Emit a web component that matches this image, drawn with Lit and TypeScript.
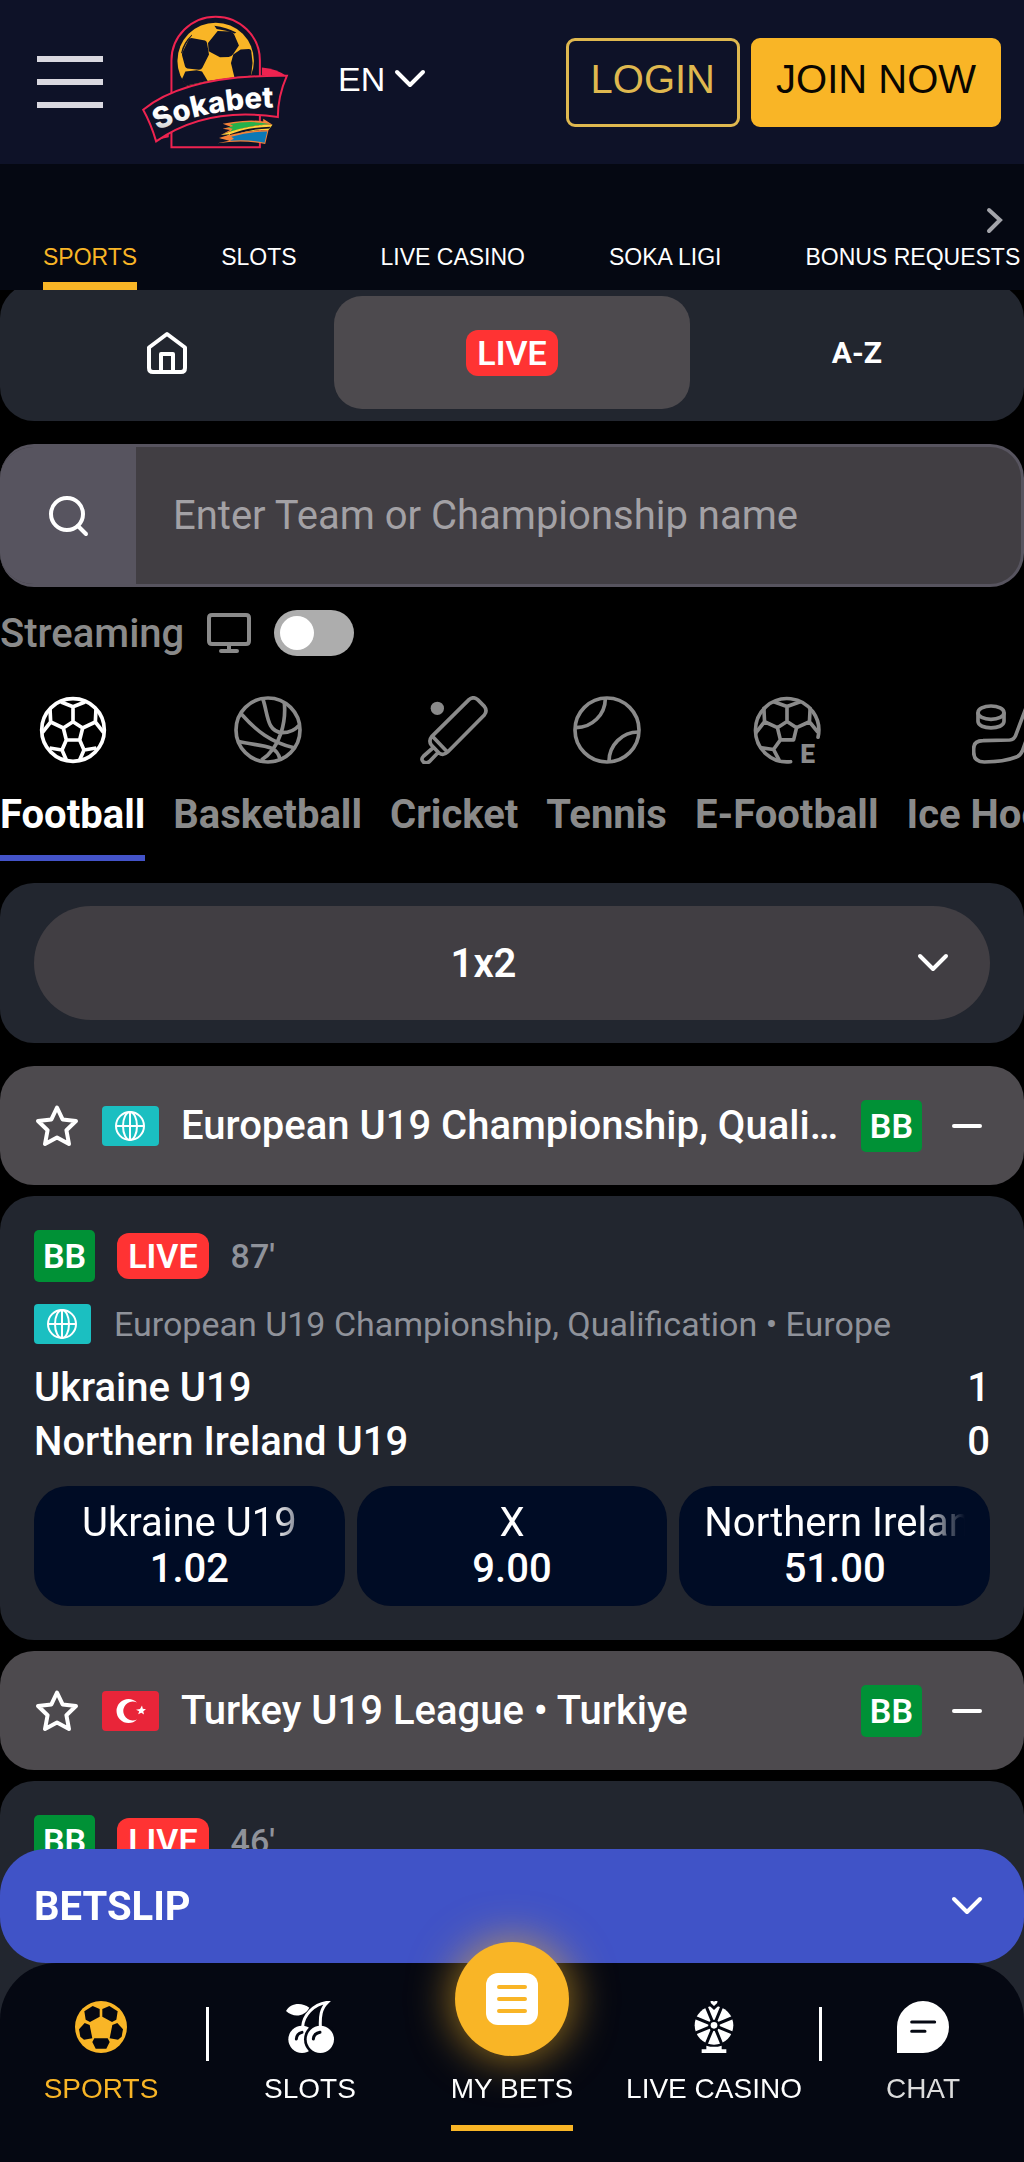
import { LitElement, html, css, nothing, TemplateResult } from "lit";
import { customElement, property, state } from "lit/decorators.js";
import { classMap } from "lit/directives/class-map.js";

/* ---------- icons ---------- */

const chevronDown = html`<svg class="chevron" viewBox="0 0 32 20" aria-hidden="true">
  <path d="M3 3 16 16 29 3" fill="none" stroke="currentColor" stroke-width="4" stroke-linecap="round" stroke-linejoin="round" />
</svg>`;

const football = html`<svg viewBox="116 74 204 204" aria-hidden="true">
  <g fill="none" stroke="currentColor" stroke-width="11" stroke-linejoin="round">
    <circle cx="218" cy="176" r="94" />
    <path d="M218 151 247 170 238 206H198L189 170Z M218 151V106M182 92 218 106 254 92M189 170 151 152 149 112M151 152 126 184M247 170 285 152 287 112M285 152 310 184M198 206 185 236 198 266M185 236 148 230M238 206 251 236 238 266M251 236 288 230" />
  </g>
</svg>`;

const basketball = html`<svg viewBox="700 78 204 204" aria-hidden="true">
  <g fill="none" stroke="currentColor" stroke-width="11">
    <circle cx="802" cy="180" r="96" />
    <path d="M787 88C802 132 798 186 845 188C869 188 884 179 895 166M851 98C856 150 842 232 782 270M722 132C766 182 812 218 880 233M711 214C776 230 828 220 838 268" />
  </g>
</svg>`;

const cricket = html`<svg viewBox="1258 78 204 204" aria-hidden="true">
  <circle cx="1310" cy="115" r="20" fill="currentColor" />
  <g fill="none" stroke="currentColor" stroke-width="11" stroke-linejoin="round" stroke-linecap="round">
    <path d="M1405 89Q1418 78 1431 89L1451 109Q1461 122 1451 135L1341 246Q1328 258 1315 249L1292 225Q1283 212 1293 200ZM1298 202 1338 244M1293 237 1269 258Q1259 268 1268 276Q1280 282 1288 273L1308 252" />
  </g>
</svg>`;

const tennis = html`<svg viewBox="180 78 204 204" aria-hidden="true">
  <g fill="none" stroke="currentColor" stroke-width="11">
    <circle cx="282" cy="180" r="96" />
    <path d="M277 86A88 88 0 0 1 188 173M288 274A88 88 0 0 1 376 186" />
  </g>
</svg>`;

const eFootball = html`<svg viewBox="718 76 204 206" aria-hidden="true">
  <g fill="none" stroke="currentColor" stroke-width="11" stroke-linejoin="round" stroke-linecap="round">
    <path d="M914 201A96 96 0 1 0 831 275" />
    <path d="M820 153 849 172 840 209H800L791 172ZM820 153V108M782 94 820 108 858 94M791 172 752 154 750 113M752 154 726 187M849 172 888 154 890 113M888 154 912 184M800 209 779 238 795 268M779 238 742 233" />
  </g>
  <text class="badge-letter" x="860" y="280" font-size="80" fill="currentColor">E</text>
</svg>`;

const hockey = html`<svg viewBox="1375 78 204 204" aria-hidden="true">
  <g fill="none" stroke="currentColor" stroke-width="11" stroke-linejoin="round" stroke-linecap="round">
    <ellipse cx="1432" cy="128" rx="39" ry="20" />
    <path d="M1393 130V154C1393 180 1471 180 1471 154V130M1548 84 1506 196Q1501 209 1488 210L1408 212Q1380 212 1380 236V246Q1380 276 1412 276Q1470 276 1508 261Q1520 257 1526 243L1574 110" />
  </g>
</svg>`;

const logo = html`<svg class="logo-art" viewBox="420 40 450 415" role="img" aria-label="Sokabet">
  <defs>
    <clipPath id="ball"><path d="M500 40H800V226Q640 232 500 275Z" /></clipPath>
    <linearGradient id="shine" x1="0" y1="0" x2="0" y2="1">
      <stop offset="0.6" stop-color="#fff" /><stop offset="1" stop-color="#b9b9bd" />
    </linearGradient>
  </defs>
  <path d="M514 444V183A133 132 0 0 1 780 183V444Z" fill="#0e1228" stroke="#ee2350" stroke-width="6" />
  <g clip-path="url(#ball)">
    <circle cx="647" cy="184" r="115" fill="#f9b526" />
    <g fill="#0e1228">
      <path d="M574 115 615 123Q620 125 621 130L627 165 607 205Q604 211 597 211L562 207Q557 206 555 201L546 168Q545 163 547 158L566 120Q568 115 574 115Z" />
      <path d="M653 94 690 96Q698 98 702 103L717 138 700 163Q695 171 686 172L660 173 626 155 624 130Z" />
      <path d="M722 150 747 148Q753 148 754 154L758 190 752 240H705L693 190 700 165Z" />
      <path d="M556 216 590 212 606 216 624 246 560 262 545 240Z" />
      <path d="M643 78Q680 82 709 99L704 102Q680 92 650 88Z" />
      <path d="M576 105Q550 128 543 160L546 162Q556 130 576 108Z" />
    </g>
  </g>
  <path d="M786 204Q830 208 861 230L786 227Z" fill="#ee2350" />
  <path d="M478 420 506 402V414Z" fill="#ee2350" />
  <path d="M429 331Q560 225 861 229Q834 290 834 353Q620 320 468 426Q452 372 429 331Z" fill="#0e1228" stroke="#ee2350" stroke-width="6" />
  <path id="arc" d="M472 393Q620 326 840 324" fill="none" />
  <text class="logo-text" font-size="88" fill="url(#shine)"><textPath href="#arc">Sokabet</textPath></text>
  <path d="M668 373 700 368Q750 360 790 366L790 358 818 376Q740 376 664 406L690 392 668 388 692 382Z" fill="#f58238" />
  <path d="M690 374Q750 362 812 374Q745 378 690 398L698 388 684 384 700 380Z" fill="#25b24a" />
  <path d="M662 407Q740 376 818 376L806 392Q740 390 660 420L690 405Z" fill="#ffd23a" />
  <path d="M690 405Q740 384 812 382L808 387Q750 388 690 411Z" fill="#0e1228" />
  <path d="M657 416Q720 394 806 392L796 434Q730 420 652 432L688 424Z" fill="#f58238" />
  <path d="M694 412Q750 396 802 396L794 430Q750 420 690 424L702 418Z" fill="#0b79b5" />
</svg>`;

const globeFlag = html`<svg class="flag" viewBox="0 0 57 40" aria-hidden="true">
  <rect width="57" height="40" rx="4" fill="#1bbfc1" />
  <g fill="none" stroke="#fff" stroke-width="2">
    <circle cx="28" cy="20" r="14" /><ellipse cx="28" cy="20" rx="7" ry="14" /><path d="M14 20H42M28 6V34" />
  </g>
</svg>`;

const turkeyFlag = html`<svg class="flag" viewBox="0 0 57 40" aria-hidden="true">
  <rect width="57" height="40" rx="4" fill="#e92539" />
  <path d="M35 11.500A12 12 0 1 0 35 28.500A9.500 9.500 0 1 1 35 11.500Z" fill="#fff" />
  <path d="M40 14.500 40.800 17.700 44 18.200 41.300 20.300 42 23.600 39.300 21.800 36.200 23.200 37.200 20.200 34 18.700 38 18Z" fill="#fff" />
</svg>`;

const star = html`<svg class="icon46" viewBox="0 0 46 46" aria-hidden="true">
  <path d="M23 4.500 28.600 16.400 42 18 32.400 27.200 35 41 23 34.500 11 41 13.600 27.200 4 18 17.400 16.400Z" fill="none" stroke="currentColor" stroke-width="4" stroke-linejoin="round" />
</svg>`;

const ballSolid = html`<svg viewBox="225 183 156 156" aria-hidden="true">
  <circle cx="303" cy="261" r="78" fill="currentColor" />
  <g class="cut">
    <path d="M253 214 278 198 299 207V230L270 246 257 239Z" /><path d="M353 214 328 198 307 207V230L336 246 349 239Z" />
    <path d="M237 268 254 249 269 255 277 295 252 299 241 290Z" /><path d="M369 268 352 249 337 255 329 295 354 299 365 290Z" />
    <path d="M283 295H323L329 306 319 326H287L277 306Z" />
  </g>
</svg>`;

const cherries = html`<svg viewBox="854 183 156 156" aria-hidden="true">
  <circle cx="908" cy="298" r="41" fill="currentColor" />
  <circle class="cut" cx="963" cy="298" r="49" />
  <circle cx="963" cy="298" r="41" fill="currentColor" />
  <path d="M860 213C872 190 905 184 930 203C916 230 882 234 860 213Z" fill="currentColor" />
  <path d="M910 260C912 226 942 193 984 187C964 206 962 230 963 258" fill="none" stroke="currentColor" stroke-width="9" />
  <path class="cut-line" d="M891 297Q892 281 908 277M942 297Q944 280 962 277" />
</svg>`;

const wheel = html`<svg viewBox="527 183 156 156" aria-hidden="true">
  <circle cx="605" cy="256" r="58" fill="currentColor" />
  <path class="cut-line" d="M583 203 627 309M627 203 583 309M552 234 658 278M658 234 552 278" />
  <circle class="cut" cx="605" cy="256" r="17" />
  <circle cx="605" cy="256" r="10" fill="currentColor" />
  <path class="cut" d="M584 180H626L620 196 605 210 590 196Z" />
  <path d="M594 184Q600 181 605 185Q610 181 616 184L614 190 605 198 596 190Z" fill="currentColor" />
  <path d="M582 317Q605 324 628 317V328H642V339H568V328H582Z" fill="currentColor" />
</svg>`;

const chat = html`<svg viewBox="1155 183 156 156" aria-hidden="true">
  <path d="M1155 339V261A78 78 0 0 1 1311 261A78 78 0 0 1 1233 339Z" fill="currentColor" />
  <path class="cut-line" d="M1199 246H1268M1199 274H1239" />
</svg>`;

const slip = html`<svg viewBox="0 0 52 52" aria-hidden="true">
  <rect width="52" height="52" rx="12" fill="#fff" />
  <path d="M13 14H39M13 26H39M13 38H39" stroke="#f9b526" stroke-width="4" stroke-linecap="round" />
</svg>`;

/* ---------- data ---------- */

interface Match {
  minute: string;
  place?: string;
  teams: { name: string; score: string }[];
  odds: { name: string; price: string }[];
}
interface League {
  title: string;
  flag: TemplateResult;
  match: Match;
}

const sections = ["SPORTS", "SLOTS", "LIVE CASINO", "SOKA LIGI", "BONUS REQUESTS"];

const sports = [
  { name: "Football", icon: football },
  { name: "Basketball", icon: basketball },
  { name: "Cricket", icon: cricket },
  { name: "Tennis", icon: tennis },
  { name: "E-Football", icon: eFootball },
  { name: "Ice Hockey", icon: hockey },
];

const leagues: League[] = [
  {
    title: "European U19 Championship, Qualification • Europe",
    flag: globeFlag,
    match: {
      minute: "87'",
      place: "European U19 Championship, Qualification • Europe",
      teams: [
        { name: "Ukraine U19", score: "1" },
        { name: "Northern Ireland U19", score: "0" },
      ],
      odds: [
        { name: "Ukraine U19", price: "1.02" },
        { name: "X", price: "9.00" },
        { name: "Northern Ireland U19", price: "51.00" },
      ],
    },
  },
  {
    title: "Turkey U19 League • Turkiye",
    flag: turkeyFlag,
    match: { minute: "46'", teams: [], odds: [] },
  },
];

/* ---------- league block ---------- */

@customElement("league-block")
export class LeagueBlock extends LitElement {
  @property({ attribute: false }) league!: League;
  @state() private open = true;

  static styles = css`
    :host { display: flex; flex-direction: column; gap: 11px; }
    * { box-sizing: border-box; }
    button { font: inherit; color: inherit; background: none; border: 0; padding: 0; cursor: pointer; }
    .head { display: flex; align-items: center; gap: 22px; min-height: 119px; padding: 0 34px; border-radius: 34px; background: #4d4a4e; }
    .title { flex: 1; min-width: 0; margin: 0; font-size: 40px; font-weight: 500; line-height: 54px; white-space: nowrap; overflow: hidden; text-overflow: ellipsis; }
    .fav, .toggle { display: flex; flex: none; }
    .icon46 { width: 46px; height: 46px; display: block; }
    .flag { flex: none; width: 57px; height: 40px; display: block; }
    .bb { flex: none; padding: 0 9px; border-radius: 5px; background: #009136; font-size: 34px; font-weight: 600; line-height: 52px; }
    .live { padding: 0 11px; border-radius: 12px; background: #ff3333; font-size: 34px; font-weight: 600; line-height: 46px; }
    .card { display: flex; flex-direction: column; min-height: 444px; padding: 34px; border-radius: 34px; background: #22262f; }
    .status { display: flex; align-items: center; gap: 22px; }
    .minute { font-size: 34px; line-height: 46px; font-weight: 500; color: #8f929a; }
    .place { display: flex; align-items: center; gap: 23px; margin: 22px 0 17px; font-size: 34px; line-height: 40px; color: #8f929a; }
    .team { display: flex; justify-content: space-between; font-size: 40px; font-weight: 500; line-height: 54px; }
    .odds { display: grid; grid-template-columns: repeat(3, minmax(0, 1fr)); gap: 12px; margin-top: 17px; }
    .odd { display: flex; flex-direction: column; justify-content: center; height: 120px; padding: 0 25px; border-radius: 34px; background: #000c25; font-size: 40px; line-height: 46px; }
    .pick { overflow: hidden; white-space: nowrap; text-align: center; -webkit-mask-image: linear-gradient(to right, #000 calc(100% - 46px), transparent); mask-image: linear-gradient(to right, #000 calc(100% - 46px), transparent); }
    .price { font-weight: 500; text-align: center; }
  `;

  private renderMatch(m: Match) {
    return html`<article class="card">
      <div class="status"><span class="bb">BB</span><span class="live">LIVE</span><span class="minute">${m.minute}</span></div>
      ${m.place ? html`<div class="place">${this.league.flag}<span>${m.place}</span></div>` : nothing}
      ${m.teams.map((t) => html`<div class="team"><span>${t.name}</span><span>${t.score}</span></div>`)}
      ${m.odds.length
        ? html`<div class="odds">
            ${m.odds.map((o) => html`<button class="odd"><span class="pick">${o.name}</span><span class="price">${o.price}</span></button>`)}
          </div>`
        : nothing}
    </article>`;
  }

  render() {
    return html`<header class="head">
        <button class="fav" aria-label="Add to favourites">${star}</button>
        ${this.league.flag}
        <h2 class="title">${this.league.title}</h2>
        <span class="bb">BB</span>
        <button class="toggle" aria-label="Collapse league" aria-expanded=${this.open} @click=${() => (this.open = !this.open)}>
          <svg class="icon46" viewBox="0 0 46 46" aria-hidden="true"><path d="M10 23H36" stroke="currentColor" stroke-width="4" stroke-linecap="round" /></svg>
        </button>
      </header>
      ${this.open ? this.renderMatch(this.league.match) : nothing}`;
  }
}

/* ---------- page ---------- */

@customElement("app-root")
export class AppRoot extends LitElement {
  @state() private sport = "Football";

  static styles = css`
    :host { display: block; height: 100vh; overflow: hidden; background: #000; color: #fff; font-family: Roboto, sans-serif; }
    * { box-sizing: border-box; }
    button, select, input { font: inherit; color: inherit; border: 0; padding: 0; margin: 0; background: none; }
    button, select { cursor: pointer; }
    a { color: inherit; text-decoration: none; }
    svg { display: block; }

    .top { display: flex; align-items: center; min-height: 164px; padding: 0 23px 0 37px; background: #0e1228; font-family: "Liberation Sans", Arial, sans-serif; }
    .menu { display: flex; flex-direction: column; gap: 17px; width: 66px; }
    .bar { height: 6px; background: #d9d8e0; }
    .logo { margin-left: 37px; }
    .logo-art { width: 150px; height: 138px; }
    .logo-text { font-family: Inter, sans-serif; font-weight: 800; }
    .lang { display: flex; align-items: center; gap: 8px; margin: 0 auto 6px 48px; font-size: 34px; }
    .lang-select { appearance: none; line-height: 40px; }
    .auth { display: flex; gap: 11px; }
    .login, .join { height: 89px; padding: 0 22px 6px; border: 3px solid #dfb84f; border-radius: 9px; font-size: 40px; color: #dfb84f; white-space: nowrap; }
    .join { background: #f9b526; border-color: #f9b526; color: #0a0600; }
    .chevron { width: 32px; height: 20px; flex: none; }

    .sections { position: relative; z-index: 1; display: flex; flex-direction: column; min-height: 126px; background: #050812; font-family: "Liberation Sans", Arial, sans-serif; }
    .more { align-self: flex-end; margin: 41px 20px 0 0; width: 20px; height: 30px; color: #a3a4aa; }
    .section-list { display: flex; gap: 84px; padding: 0 0 0 43px; margin-top: auto; overflow: hidden; }
    .section { flex: none; padding: 0 0 11px; border-bottom: 8px solid transparent; font-size: 23px; line-height: 28px; white-space: nowrap; }
    .section.on { color: #f9b526; border-color: #f9b526; }

    .modes { display: flex; gap: 12px; margin-top: -6px; padding: 12px; border-radius: 34px; background: #22262f; }
    .mode { flex: 1 1 auto; display: flex; align-items: center; justify-content: center; height: 113px; border-radius: 28px; }
    .mode.on { background: #4d4a4e; }
    .mode-icon { width: 46px; height: 46px; }
    .mode-text { width: 46px; display: flex; justify-content: center; font-size: 30px; font-weight: 700; white-space: nowrap; }
    .live { padding: 0 11px; border-radius: 12px; background: #ff3333; font-size: 34px; font-weight: 600; line-height: 46px; }

    .search { display: flex; height: 143px; margin-top: 23px; border: 3px solid #57545f; border-left: 0; border-radius: 34px; background: #413e43; overflow: hidden; }
    .search-go { display: flex; align-items: center; justify-content: center; width: 136px; background: #57545f; }
    .search-icon { width: 46px; height: 46px; }
    .search-box { flex: 1; min-width: 0; padding: 0 37px; font-size: 40px; outline: 0; }
    .search-box::placeholder { color: #a3a1a5; opacity: 1; }

    .streaming { display: flex; align-items: center; gap: 22px; margin-top: 23px; height: 46px; color: #8a8a8a; font-size: 40px; font-weight: 500; }
    .stream-icon { width: 46px; height: 46px; }
    .switch { appearance: none; display: flex; align-items: center; width: 80px; height: 46px; padding: 0 6px; border-radius: 23px; background: #adadad; cursor: pointer; }
    .switch::before { content: ""; width: 34px; height: 34px; border-radius: 50%; background: #fff; }
    .switch:checked { justify-content: flex-end; background: #4053c7; }

    .sports { display: flex; gap: 28px; margin-top: 40px; overflow: hidden; color: #8a8a8a; }
    .sport { flex: none; display: flex; flex-direction: column; align-items: center; border-bottom: 6px solid transparent; font-size: 40px; font-weight: 700; line-height: 46px; }
    .sport svg { width: 68px; height: 68px; }
    .sport-name { padding: 28px 0 17px; white-space: nowrap; }
    .sport.on { color: #fff; border-color: #4353c8; }
    .badge-letter { font-family: Roboto, sans-serif; font-weight: 900; }

    .market { display: grid; margin: 22px 0 23px; padding: 23px 34px; border-radius: 34px; background: #22262f; }
    .market-select { grid-area: 1 / 1; appearance: none; width: 100%; height: 114px; padding: 0 91px 0 34px; border-radius: 57px; background: #413e43; font-size: 40px; font-weight: 600; text-align: center; text-align-last: center; }
    .market .chevron { grid-area: 1 / 1; place-self: center end; margin-right: 41px; pointer-events: none; }

    .leagues { display: flex; flex-direction: column; gap: 11px; }

    .dock { position: fixed; left: 0; right: 0; bottom: 0; z-index: 2; }
    .betslip { display: flex; align-items: center; justify-content: space-between; width: 100%; height: 114px; padding: 0 41px 0 34px; border-radius: 46px; background: #4053c7; font-size: 40px; font-weight: 700; }
    .tabs { display: grid; grid-template-columns: 1fr 7px 1fr 1fr 1fr 7px 1fr; height: 199px; padding-top: 38px; border-radius: 57px 57px 0 0; background: #050812; font-family: "Liberation Sans", Arial, sans-serif; }
    .tab { position: relative; display: flex; flex-direction: column; align-items: center; gap: 20px; font-size: 28px; line-height: 32px; white-space: nowrap; }
    .tab svg { width: 52px; height: 52px; }
    .tab.on { color: #f9b526; }
    .tab.dim { color: #dcdcdc; }
    .tab.dim svg { color: #fff; }
    .rule { width: 3px; height: 54px; margin-top: 6px; justify-self: end; background: #fff; }
    .blank { height: 52px; }
    .bubble { position: absolute; top: -59px; display: flex; align-items: center; justify-content: center; width: 114px; height: 114px; border-radius: 50%; background: #f9b526; box-shadow: 0 0 46px rgba(249, 181, 38, 0.7); }
    .under { padding-bottom: 20px; border-bottom: 6px solid #f9b526; }
    .label { position: relative; }
    .cut { fill: #050812; }
    .cut-line { fill: none; stroke: #050812; stroke-width: 9; stroke-linecap: round; }
  `;

  render() {
    return html`
      <header class="top">
        <button class="menu" aria-label="Menu"><span class="bar"></span><span class="bar"></span><span class="bar"></span></button>
        <a class="logo" href="#">${logo}</a>
        <div class="lang">
          <select class="lang-select" aria-label="Language"><option>EN</option></select>
          ${chevronDown}
        </div>
        <div class="auth"><button class="login">LOGIN</button><button class="join">JOIN NOW</button></div>
      </header>

      <nav class="sections" aria-label="Sections">
        <button class="more" aria-label="More sections">
          <svg viewBox="0 0 20 30" width="20" height="30"><path d="M5 5 16 15 5 26" fill="none" stroke="currentColor" stroke-width="4" stroke-linecap="round" /></svg>
        </button>
        <div class="section-list">
          ${sections.map((s, i) => html`<a href="#" class=${classMap({ section: true, on: i === 0 })}>${s}</a>`)}
        </div>
      </nav>

      <div class="modes">
        <button class="mode" aria-label="Home">
          <svg class="mode-icon" viewBox="0 0 46 46"><path d="M5 17.500 23 4 41 17.500V38Q41 42 37 42H9Q5 42 5 38ZM17 41V24H29V41" fill="none" stroke="currentColor" stroke-width="4" stroke-linejoin="round" /></svg>
        </button>
        <button class="mode on"><span class="live">LIVE</span></button>
        <button class="mode"><span class="mode-text">A-Z</span></button>
      </div>

      <div class="search">
        <button class="search-go" aria-label="Search">
          <svg class="search-icon" viewBox="0 0 46 46"><g fill="none" stroke="currentColor" stroke-width="4" stroke-linecap="round"><circle cx="22" cy="21" r="16" /><path d="M33 33 41 41" /></g></svg>
        </button>
        <input class="search-box" type="text" aria-label="Search" placeholder="Enter Team or Championship name" />
      </div>

      <label class="streaming">
        <span>Streaming</span>
        <svg class="stream-icon" viewBox="0 0 46 46"><path d="M6 5H40Q43 5 43 8V31Q43 34 40 34H6Q3 34 3 31V8Q3 5 6 5ZM23 34V41M15 41H31" fill="none" stroke="currentColor" stroke-width="4" stroke-linecap="round" /></svg>
        <input class="switch" type="checkbox" role="switch" />
      </label>

      <div class="sports">
        ${sports.map(
          (s) => html`<button class=${classMap({ sport: true, on: s.name === this.sport })} @click=${() => (this.sport = s.name)}>
            ${s.icon}<span class="sport-name">${s.name}</span>
          </button>`
        )}
      </div>

      <div class="market">
        <select class="market-select" aria-label="Market"><option>1x2</option></select>
        ${chevronDown}
      </div>

      <main class="leagues">${leagues.map((l) => html`<league-block .league=${l}></league-block>`)}</main>

      <div class="dock">
        <button class="betslip"><span>BETSLIP</span>${chevronDown}</button>
        <nav class="tabs" aria-label="Main">
          <a class="tab on" href="#">${ballSolid}<span>SPORTS</span></a>
          <span class="rule"></span>
          <a class="tab" href="#">${cherries}<span>SLOTS</span></a>
          <a class="tab" href="#"><span class="bubble">${slip}</span><span class="blank"></span><span class="label under">MY BETS</span></a>
          <a class="tab" href="#">${wheel}<span>LIVE CASINO</span></a>
          <span class="rule"></span>
          <a class="tab dim" href="#">${chat}<span>CHAT</span></a>
        </nav>
      </div>
    `;
  }
}
